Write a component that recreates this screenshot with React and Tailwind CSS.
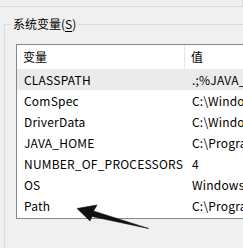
const rows = [
  { name: 'CLASSPATH', value: '.;%JAVA_HOME%\\lib', selected: true },
  { name: 'ComSpec', value: 'C:\\Windows\\system32\\cmd.exe' },
  { name: 'DriverData', value: 'C:\\Windows\\System32\\Drivers' },
  { name: 'JAVA_HOME', value: 'C:\\Program Files\\Java\\jdk' },
  { name: 'NUMBER_OF_PROCESSORS', value: '4' },
  { name: 'OS', value: 'Windows_NT' },
  { name: 'Path', value: 'C:\\Program Files\\Java\\jdk\\bin' },
]

const Arrow = () => (
  <svg
    className="absolute left-0 top-0 pointer-events-none"
    width="243"
    height="248"
    viewBox="0 0 243 248"
  >
    <polygon
      points="77,208.5 97,205 93.5,211 148.5,228.5 92,216.5 90,221"
      fill="#111"
      stroke="#111"
      strokeWidth="0.6"
      strokeLinejoin="round"
    />
  </svg>
)

export default function App() {
  return (
    <div className="relative w-[243px] h-[248px] overflow-hidden bg-[#f0f0f0] text-black font-['Noto_Sans_CJK_SC','Liberation_Sans',sans-serif] text-[12px]">
      {/* previous group box, bottom edge */}
      <div className="w-[243px] h-[7px] border-b border-r border-[#dcdcdc]" />

      {/* system variables group */}
      <div className="mt-[17px] ml-[4px] w-[260px] h-[230px] border-l border-t border-[#dcdcdc]">
        <div className="-mt-[9px] ml-[6px] w-fit px-[2px] bg-[#f0f0f0] leading-[16px]">
          系统变量(<span className="underline underline-offset-2">S</span>)
        </div>

        <div className="mt-[12px] ml-[11px] w-[260px] h-[175px] border border-[#828790] bg-white">
          <div className="flex h-[24px] items-center">
            <div className="w-[168px] h-full flex items-center pl-[6px] border-r border-[#e5e5e5]">变量</div>
            <div className="pl-[6px]">值</div>
          </div>
          {rows.map((row) => (
            <div
              key={row.name}
              className={`flex h-[21px] items-center whitespace-nowrap tracking-[0.2px] ${row.selected ? 'bg-[#ebebeb]' : ''}`}
            >
              <div className="w-[175px] pl-[7px] shrink-0">{row.name}</div>
              <div>{row.value}</div>
            </div>
          ))}
        </div>
      </div>

      <Arrow />
    </div>
  )
}
